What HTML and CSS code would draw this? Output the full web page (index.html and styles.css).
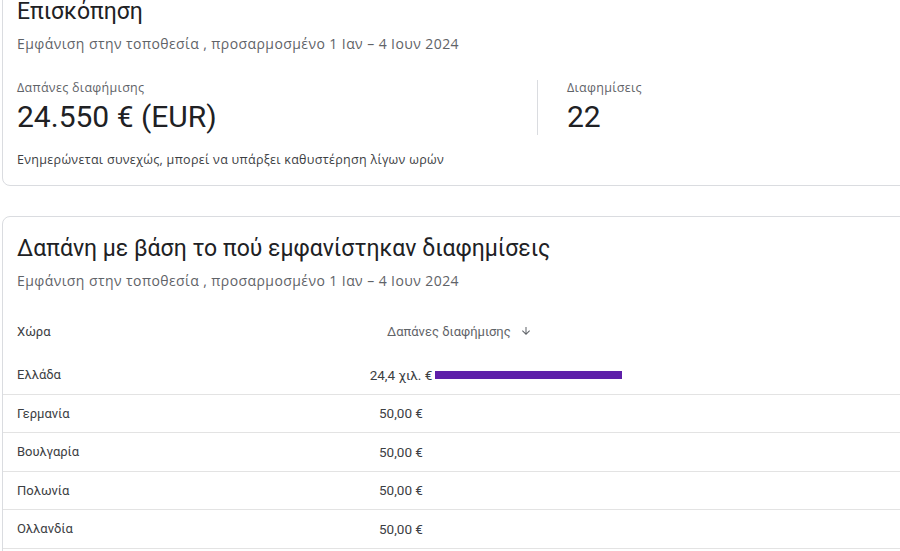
FILE: index.html
```html
<!DOCTYPE html>
<html lang="el">
<head>
    <meta charset="UTF-8">
    <meta name="viewport" content="width=device-width, initial-scale=1.0">
    <title>Επισκόπηση</title>
    <link rel="stylesheet" href="styles.css">
</head>
<body>
    <div class="page">
        <!-- Κάρτα επισκόπησης -->
        <section class="card overview">
            <h2 class="card-title">Επισκόπηση</h2>
            <p class="card-sub">Εμφάνιση στην τοποθεσία , προσαρμοσμένο 1 Ιαν – 4 Ιουν 2024</p>

            <div class="stats">
                <div class="stat stat-main">
                    <div class="stat-label">Δαπάνες διαφήμισης</div>
                    <div class="stat-value">24.550 € (EUR)</div>
                </div>
                <div class="stat stat-side">
                    <div class="stat-label">Διαφημίσεις</div>
                    <div class="stat-value">22</div>
                </div>
            </div>

            <p class="note">Ενημερώνεται συνεχώς, μπορεί να υπάρξει καθυστέρηση λίγων ωρών</p>
        </section>

        <!-- Κάρτα δαπάνης ανά χώρα -->
        <section class="card spend">
            <h2 class="card-title">Δαπάνη με βάση το πού εμφανίστηκαν διαφημίσεις</h2>
            <p class="card-sub">Εμφάνιση στην τοποθεσία , προσαρμοσμένο 1 Ιαν – 4 Ιουν 2024</p>

            <div class="table">
                <div class="row head">
                    <div class="cell country">Χώρα</div>
                    <div class="cell amount-head">
                        Δαπάνες διαφήμισης
                        <svg class="sort-icon" viewBox="0 0 24 24" width="12" height="12"><path d="M20 12l-1.41-1.41L13 16.17V4h-2v12.17l-5.58-5.59L4 12l8 8 8-8z" fill="#5f6368"/></svg>
                    </div>
                </div>
                <div class="row">
                    <div class="cell country">Ελλάδα</div>
                    <div class="cell amount">
                        <span class="amount-text">24,4 χιλ. €</span>
                        <span class="bar" style="width: 187px"></span>
                    </div>
                </div>
                <div class="row">
                    <div class="cell country">Γερμανία</div>
                    <div class="cell amount"><span class="amount-text">50,00 €</span></div>
                </div>
                <div class="row">
                    <div class="cell country">Βουλγαρία</div>
                    <div class="cell amount"><span class="amount-text">50,00 €</span></div>
                </div>
                <div class="row">
                    <div class="cell country">Πολωνία</div>
                    <div class="cell amount"><span class="amount-text">50,00 €</span></div>
                </div>
                <div class="row">
                    <div class="cell country">Ολλανδία</div>
                    <div class="cell amount"><span class="amount-text">50,00 €</span></div>
                </div>
            </div>
        </section>
    </div>
</body>
</html>
```

FILE: styles.css
```css
body {
    margin: 0;
    padding: 0;
    background-color: #fff;
    font-family: Roboto, "Noto Sans", sans-serif;
    color: #202124;
    overflow: hidden;
}
.page {
    margin-top: -15px;
    padding-left: 2px;
    width: 1100px;
}
.card {
    background-color: #fff;
    border: 1px solid #dadce0;
    border-radius: 8px;
}
.card-title {
    margin: 0;
    padding: 0 14px;
    font-size: 23px;
    line-height: 32px;
    font-weight: 400;
    color: #202124;
}
.card-sub {
    margin: 6px 0 0;
    padding: 0 14px;
    font-family: "Open Sans", Roboto, sans-serif;
    font-size: 14px;
    line-height: 20px;
    letter-spacing: 0.42px;
    color: #5f6368;
}
/* Επισκόπηση */
.overview {
    padding: 10px 0 16px;
}
.stats {
    display: flex;
    margin-top: 26px;
    padding-left: 14px;
}
.stat-main {
    width: 520px;
    border-right: 1px solid #dadce0;
}
.stat-side {
    padding-left: 29px;
}
.stat-label {
    font-family: "Open Sans", Roboto, sans-serif;
    font-size: 12.5px;
    line-height: 16px;
    letter-spacing: 0.3px;
    color: #5f6368;
}
.stat-value {
    margin-top: 3px;
    font-size: 30px;
    line-height: 36px;
    color: #202124;
}
.note {
    margin: 16px 0 0;
    padding: 0 14px;
    font-family: "Open Sans", Roboto, sans-serif;
    font-size: 12.5px;
    line-height: 18px;
    letter-spacing: 0.3px;
    color: #3c4043;
}
/* Δαπάνη ανά χώρα */
.spend {
    margin-top: 30px;
    padding-top: 16px;
    padding-bottom: 40px;
}
.spend .card-sub {
    margin-top: 6px;
}
.table {
    margin-top: 21px;
}
.row {
    display: grid;
    grid-template-columns: 365px 1fr;
    align-items: center;
    height: 37.5px;
    border-bottom: 1px solid #e3e3e3;
    font-size: 13px;
    color: #3c4043;
}
.row.head {
    height: 38px;
    padding-bottom: 6px;
    border-bottom: none;
}
.cell.country {
    padding-left: 14px;
}
.amount-head {
    display: flex;
    align-items: center;
    padding-left: 19px;
    color: #5f6368;
}
.sort-icon {
    margin-left: 9px;
}
.amount {
    display: flex;
    align-items: center;
}
.amount-text {
    width: 66px;
    text-align: center;
    font-size: 13.5px;
}
.bar {
    display: inline-block;
    height: 8px;
    margin-left: 1px;
    background-color: #5e1fa9;
}
```
